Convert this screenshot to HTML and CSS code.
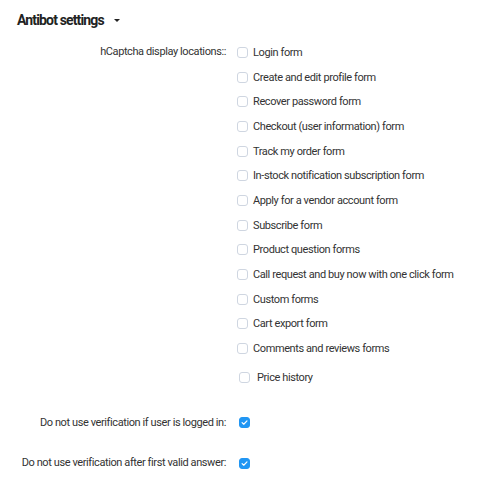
FILE: index.html
```html
<!DOCTYPE html>
<html>
<head>
<meta charset="utf-8">
<link rel="stylesheet" href="styles.css">
</head>
<body>
<div class="section">
  <h2 class="section-title">Antibot settings <span class="caret"></span></h2>
  <div class="form-row">
    <div class="label"><span>hCaptcha display locations::</span></div>
    <div class="controls">
      <ul class="check-list">
        <li><span class="cb"></span>Login form</li>
        <li><span class="cb"></span>Create and edit profile form</li>
        <li><span class="cb"></span>Recover password form</li>
        <li><span class="cb"></span>Checkout (user information) form</li>
        <li><span class="cb"></span>Track my order form</li>
        <li><span class="cb"></span>In-stock notification subscription form</li>
        <li><span class="cb"></span>Apply for a vendor account form</li>
        <li><span class="cb"></span>Subscribe form</li>
        <li><span class="cb"></span>Product question forms</li>
        <li><span class="cb"></span>Call request and buy now with one click form</li>
        <li><span class="cb"></span>Custom forms</li>
        <li><span class="cb"></span>Cart export form</li>
        <li><span class="cb"></span>Comments and reviews forms</li>
      </ul>
      <div class="extra-item"><span class="cb"></span>Price history</div>
    </div>
  </div>
  <div class="form-row single first-single">
    <div class="label"><span>Do not use verification if user is logged in:</span></div>
    <div class="controls"><span class="cb checked"><svg viewBox="0 0 12 12" width="11" height="11"><path d="M2.8 6.2 L5 8.3 L9.3 3.8" fill="none" stroke="#fff" stroke-width="1.6" stroke-linecap="round" stroke-linejoin="round"/></svg></span></div>
  </div>
  <div class="form-row single second-single">
    <div class="label"><span>Do not use verification after first valid answer:</span></div>
    <div class="controls"><span class="cb checked"><svg viewBox="0 0 12 12" width="11" height="11"><path d="M2.8 6.2 L5 8.3 L9.3 3.8" fill="none" stroke="#fff" stroke-width="1.6" stroke-linecap="round" stroke-linejoin="round"/></svg></span></div>
  </div>
</div>
</body>
</html>
```
FILE: styles.css
```css
html, body {
  margin: 0;
  padding: 0;
  background: #fff;
}
body {
  font-family: Roboto, "Liberation Sans", sans-serif;
  color: #333;
  font-size: 11px;
  letter-spacing: -0.4px;
}
.section {
  padding: 11px 0 0 17px;
}
.section-title {
  margin: 0 0 11px 0;
  font-size: 14px;
  font-weight: 700;
  color: #222;
  line-height: 18px;
  letter-spacing: -0.85px;
  display: flex;
  align-items: center;
}
.caret {
  display: inline-block;
  width: 0;
  height: 0;
  margin-left: 10px;
  border-left: 3px solid transparent;
  border-right: 3px solid transparent;
  border-top: 3.5px solid #222;
}
.form-row {
  display: grid;
  grid-template-columns: 209px 1fr;
  column-gap: 11px;
}
.label {
  display: flex;
  justify-content: flex-end;
  line-height: 24.7px;
  white-space: nowrap;
}
.label span {
  flex: none;
}
.check-list {
  list-style: none;
  margin: 0;
  padding: 0;
}
.check-list li {
  display: flex;
  align-items: center;
  height: 24.7px;
  white-space: nowrap;
}
.cb {
  box-sizing: border-box;
  display: inline-flex;
  align-items: center;
  justify-content: center;
  width: 11px;
  height: 11px;
  border: 1px solid #cfd6e1;
  border-radius: 3px;
  background: #fff;
  margin-right: 5px;
  flex: none;
}
.cb.checked {
  background: #2196f3;
  border-color: #2196f3;
  margin-right: 0;
}
.extra-item {
  display: flex;
  align-items: center;
  height: 24px;
  padding-left: 2px;
  margin-top: 4.75px;
}
.extra-item .cb {
  margin-right: 7px;
}
.single .label {
  line-height: 16px;
}
.single .controls {
  padding-left: 2px;
  display: flex;
  align-items: center;
  height: 16px;
}
.first-single {
  margin-top: 25px;
}
.second-single {
  margin-top: 24.5px;
}
```
